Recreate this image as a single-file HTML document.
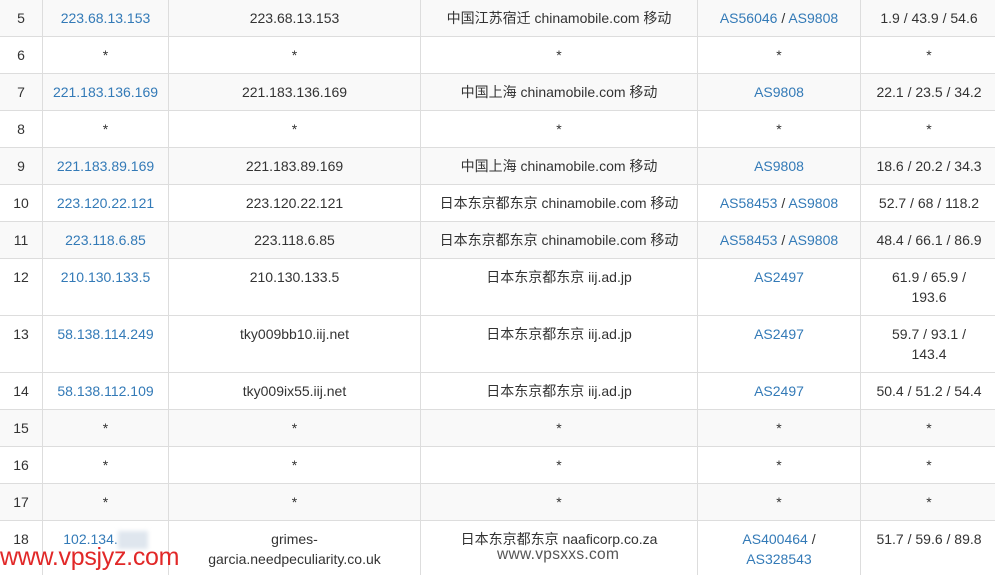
<!DOCTYPE html>
<html><head><meta charset="utf-8"><style>
html,body{margin:0;padding:0;width:995px;height:575px;overflow:hidden;background:#fff}
body{font-family:"Liberation Sans","Noto Sans CJK SC",sans-serif;font-size:14px;color:#333;position:relative}
table{border-collapse:collapse;table-layout:fixed;position:absolute;left:-1px;top:-1px;width:998px}
td{border:1px solid #ddd;text-align:center;vertical-align:top;padding:8px 4px 0;line-height:20px;overflow:hidden;white-space:nowrap}
tr.g td{background:#f9f9f9}
a{color:#337ab7;text-decoration:none}
.w1{position:absolute;left:0;top:543px;font-size:25px;color:#e12828;letter-spacing:-0.3px;font-family:"Liberation Sans",sans-serif}
.w2{position:absolute;left:497px;top:546px;font-size:15.5px;color:#555;letter-spacing:0.3px}
.blur{display:inline-block;width:30px;height:18px;background:#dfe6ee;vertical-align:middle;filter:blur(2px)}
</style></head><body>
<table>
<colgroup><col style="width:43px"><col style="width:126px"><col style="width:252px"><col style="width:277px"><col style="width:163px"><col style="width:137px"></colgroup>
<tr class="g" style="height:37px"><td>5</td><td><a>223.68.13.153</a></td><td>223.68.13.153</td><td>中国江苏宿迁 chinamobile.com 移动</td><td><a>AS56046</a> / <a>AS9808</a></td><td>1.9 / 43.9 / 54.6</td></tr>
<tr style="height:37px"><td>6</td><td>*</td><td>*</td><td>*</td><td>*</td><td>*</td></tr>
<tr class="g" style="height:37px"><td>7</td><td><a>221.183.136.169</a></td><td>221.183.136.169</td><td>中国上海 chinamobile.com 移动</td><td><a>AS9808</a></td><td>22.1 / 23.5 / 34.2</td></tr>
<tr style="height:37px"><td>8</td><td>*</td><td>*</td><td>*</td><td>*</td><td>*</td></tr>
<tr class="g" style="height:37px"><td>9</td><td><a>221.183.89.169</a></td><td>221.183.89.169</td><td>中国上海 chinamobile.com 移动</td><td><a>AS9808</a></td><td>18.6 / 20.2 / 34.3</td></tr>
<tr style="height:37px"><td>10</td><td><a>223.120.22.121</a></td><td>223.120.22.121</td><td>日本东京都东京 chinamobile.com 移动</td><td><a>AS58453</a> / <a>AS9808</a></td><td>52.7 / 68 / 118.2</td></tr>
<tr class="g" style="height:37px"><td>11</td><td><a>223.118.6.85</a></td><td>223.118.6.85</td><td>日本东京都东京 chinamobile.com 移动</td><td><a>AS58453</a> / <a>AS9808</a></td><td>48.4 / 66.1 / 86.9</td></tr>
<tr style="height:57px"><td>12</td><td><a>210.130.133.5</a></td><td>210.130.133.5</td><td>日本东京都东京 iij.ad.jp</td><td><a>AS2497</a></td><td>61.9 / 65.9 /<br>193.6</td></tr>
<tr style="height:57px"><td>13</td><td><a>58.138.114.249</a></td><td>tky009bb10.iij.net</td><td>日本东京都东京 iij.ad.jp</td><td><a>AS2497</a></td><td>59.7 / 93.1 /<br>143.4</td></tr>
<tr style="height:37px"><td>14</td><td><a>58.138.112.109</a></td><td>tky009ix55.iij.net</td><td>日本东京都东京 iij.ad.jp</td><td><a>AS2497</a></td><td>50.4 / 51.2 / 54.4</td></tr>
<tr class="g" style="height:37px"><td>15</td><td>*</td><td>*</td><td>*</td><td>*</td><td>*</td></tr>
<tr style="height:37px"><td>16</td><td>*</td><td>*</td><td>*</td><td>*</td><td>*</td></tr>
<tr class="g" style="height:37px"><td>17</td><td>*</td><td>*</td><td>*</td><td>*</td><td>*</td></tr>
<tr style="height:59px"><td>18</td><td><a>102.134.</a><span class="blur"></span></td><td>grimes-<br>garcia.needpeculiarity.co.uk</td><td>日本东京都东京 naaficorp.co.za</td><td><a>AS400464</a> /<br><a>AS328543</a></td><td>51.7 / 59.6 / 89.8</td></tr>
</table>
<div class="w1">www.vpsjyz.com</div>
<div class="w2">www.vpsxxs.com</div>
</body></html>
